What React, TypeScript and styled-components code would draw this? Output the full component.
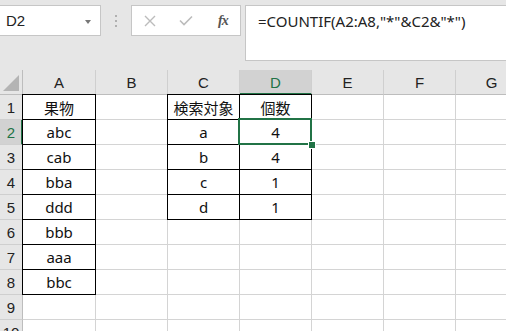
import React from 'react';
import styled, { createGlobalStyle, css } from 'styled-components';

const GREEN = '#217346';

const GlobalStyle = createGlobalStyle`
  html, body {
    margin: 0;
    padding: 0;
    background: #e6e6e6;
    overflow: hidden;
    height: 331px;
  }
  * { box-sizing: border-box; }
`;

const Page = styled.div`
  width: 506px;
  height: 331px;
  overflow: hidden;
  background: #e6e6e6;
`;

const Toolbar = styled.div`
  display: flex;
  align-items: flex-start;
  height: 70px;
  padding-top: 5px;
`;

const NameBox = styled.div`
  position: relative;
  width: 101px;
  height: 31px;
  background: #fff;
  border: 1px solid #c6c6c6;
  border-left: none;
  display: flex;
  align-items: center;
  padding-left: 6px;
  font-family: 'Liberation Sans', Arial, sans-serif;
  font-size: 15px;
  color: #222;
`;

const DropArrow = styled.span`
  position: absolute;
  right: 9px;
  top: 14px;
  width: 0;
  height: 0;
  border-left: 3.5px solid transparent;
  border-right: 3.5px solid transparent;
  border-top: 4px solid #777;
`;

const Grip = styled.div`
  width: 30px;
  height: 31px;
  display: flex;
  flex-direction: column;
  align-items: center;
  justify-content: center;
  gap: 3px;
  & > span {
    width: 2px;
    height: 2px;
    background: #b0b0b0;
  }
`;

const ButtonBox = styled.div`
  width: 110px;
  height: 31px;
  background: #fff;
  border: 1px solid #c6c6c6;
  display: flex;
  align-items: center;
  padding-left: 12px;
  gap: 23px;
`;

const Fx = styled.span`
  font-family: 'Liberation Serif', 'Times New Roman', serif;
  font-style: italic;
  font-weight: bold;
  font-size: 14px;
  color: #555;
  letter-spacing: -1px;
  margin-left: 2px;
`;

const FormulaBar = styled.div`
  flex: 1;
  margin-left: 4px;
  height: 56px;
  background: #fff;
  border: 1px solid #c6c6c6;
  border-right: none;
  padding: 5px 0 0 12px;
  font-family: 'Noto Sans', 'Noto Sans CJK JP', sans-serif;
  font-size: 15px;
  color: #222;
`;

const Sheet = styled.div`
  display: grid;
  grid-template-columns: 23px 73px repeat(6, 72px);
  grid-auto-rows: 25px;
  width: 528px;
`;

const Corner = styled.div`
  background: #e6e6e6;
  border-right: 1px solid #bdbdbd;
  border-bottom: 1px solid #bdbdbd;
  position: relative;
  &::after {
    content: '';
    position: absolute;
    right: 3px;
    bottom: 3px;
    width: 0;
    height: 0;
    border-left: 16px solid transparent;
    border-bottom: 16px solid #b4b4b4;
  }
`;

const ColHeader = styled.div<{ $active?: boolean }>`
  display: flex;
  align-items: center;
  justify-content: center;
  background: #e6e6e6;
  border-right: 1px solid #cfcfcf;
  border-bottom: 1px solid #bdbdbd;
  font-family: 'Liberation Sans', Arial, sans-serif;
  font-size: 15px;
  color: #222;
  ${p =>
    p.$active &&
    css`
      background: #d2d2d2;
      color: ${GREEN};
      border-bottom: 2px solid ${GREEN};
      padding-top: 1px;
    `}
`;

const RowHeader = styled.div<{ $active?: boolean }>`
  display: flex;
  align-items: center;
  justify-content: center;
  background: #e6e6e6;
  border-right: 1px solid #bdbdbd;
  border-bottom: 1px solid #cfcfcf;
  font-family: 'Liberation Sans', Arial, sans-serif;
  font-size: 15px;
  color: #222;
  ${p =>
    p.$active &&
    css`
      background: #d2d2d2;
      color: ${GREEN};
      border-right: 2px solid ${GREEN};
      padding-left: 1px;
    `}
`;

const Cell = styled.div<{ $boxed?: boolean; $selected?: boolean }>`
  position: relative;
  display: flex;
  align-items: center;
  justify-content: center;
  background: #fff;
  border-right: 1px solid #d4d4d4;
  border-bottom: 1px solid #d4d4d4;
  font-family: 'Noto Sans', 'Noto Sans CJK JP', sans-serif;
  font-size: 15px;
  color: #111;
  ${p =>
    p.$boxed &&
    css`
      &::before {
        content: '';
        position: absolute;
        inset: -1px -1px -1px -1px;
        border: 1px solid #000;
        z-index: 1;
        pointer-events: none;
      }
    `}
  ${p =>
    p.$selected &&
    css`
      &::after {
        content: '';
        position: absolute;
        inset: -2px -1px -1px -2px;
        border: 2px solid ${GREEN};
        z-index: 2;
      }
    `}
`;

const FillHandle = styled.span`
  position: absolute;
  right: -4px;
  bottom: -4px;
  width: 6px;
  height: 6px;
  background: ${GREEN};
  outline: 1px solid #fff;
  z-index: 3;
`;

const COLS = ['A', 'B', 'C', 'D', 'E', 'F', 'G'];

const data: Record<string, string> = {
  A1: '果物', A2: 'abc', A3: 'cab', A4: 'bba', A5: 'ddd', A6: 'bbb', A7: 'aaa', A8: 'bbc',
  C1: '検索対象', C2: 'a', C3: 'b', C4: 'c', C5: 'd',
  D1: '個数', D2: '4', D3: '4', D4: '1', D5: '1',
};

const isBoxed = (col: string, row: number) =>
  (col === 'A' && row <= 8) || ((col === 'C' || col === 'D') && row <= 5);

const CrossIcon = () => (
  <svg width="12" height="12" viewBox="0 0 12 12">
    <path d="M1 1 L11 11 M11 1 L1 11" stroke="#bcbcbc" strokeWidth="1.4" fill="none" />
  </svg>
);

const CheckIcon = () => (
  <svg width="14" height="11" viewBox="0 0 14 11">
    <path d="M1 5.5 L5 9.5 L13 1.5" stroke="#bcbcbc" strokeWidth="1.6" fill="none" />
  </svg>
);

export default function App() {
  const rows = Array.from({ length: 10 }, (_, i) => i + 1);
  return (
    <Page>
      <GlobalStyle />
      <Toolbar>
        <NameBox>
          D2
          <DropArrow />
        </NameBox>
        <Grip>
          <span />
          <span />
          <span />
        </Grip>
        <ButtonBox>
          <CrossIcon />
          <CheckIcon />
          <Fx>fx</Fx>
        </ButtonBox>
        <FormulaBar>=COUNTIF(A2:A8,"*"&amp;C2&amp;"*")</FormulaBar>
      </Toolbar>
      <Sheet>
        <Corner />
        {COLS.map(c => (
          <ColHeader key={c} $active={c === 'D'}>
            {c}
          </ColHeader>
        ))}
        {rows.map(r => (
          <React.Fragment key={r}>
            <RowHeader $active={r === 2}>{r}</RowHeader>
            {COLS.map(c => {
              const selected = c === 'D' && r === 2;
              return (
                <Cell key={c} $boxed={isBoxed(c, r)} $selected={selected}>
                  {data[`${c}${r}`]}
                  {selected && <FillHandle />}
                </Cell>
              );
            })}
          </React.Fragment>
        ))}
      </Sheet>
    </Page>
  );
}
